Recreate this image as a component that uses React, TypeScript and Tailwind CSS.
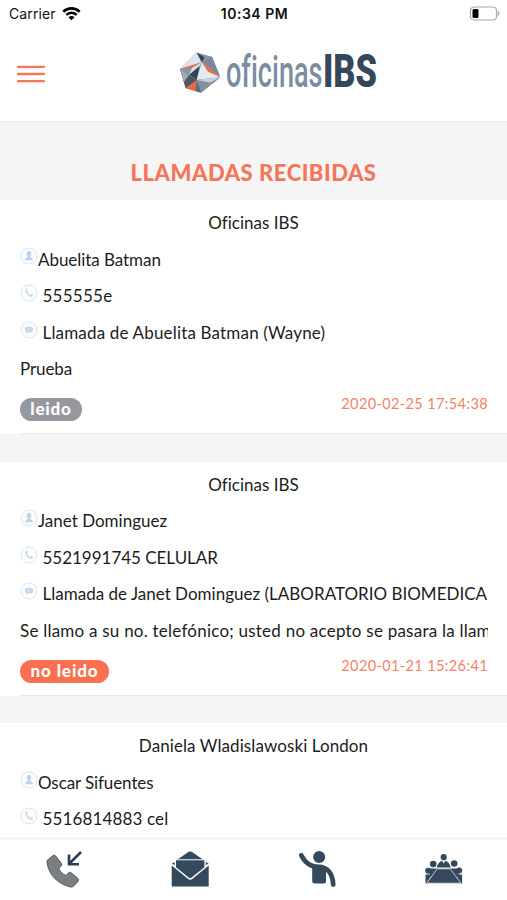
import type { ReactNode } from "react";

type Call = {
  office: string;
  name: string;
  nameClass: string;
  officeClass: string;
  phone: string;
  phoneClass: string;
  subject?: string;
  subjectClass?: string;
  message?: string;
  messageClass?: string;
  read?: boolean;
  date?: string;
};

const calls: Call[] = [
  {
    office: "Oficinas IBS",
    officeClass: "tracking-[0.01px]",
    name: "Abuelita Batman",
    nameClass: "tracking-[-0.05px]",
    phone: "555555e",
    phoneClass: "tracking-[0.25px]",
    subject: "Llamada de Abuelita Batman (Wayne)",
    subjectClass: "tracking-[0.17px]",
    message: "Prueba",
    messageClass: "tracking-[-0.1px]",
    read: true,
    date: "2020-02-25 17:54:38",
  },
  {
    office: "Oficinas IBS",
    officeClass: "tracking-[0.01px]",
    name: "Janet Dominguez",
    nameClass: "tracking-[0px]",
    phone: "5521991745 CELULAR",
    phoneClass: "tracking-[-0.02px]",
    subject: "Llamada de Janet Dominguez (LABORATORIO BIOMEDICA",
    subjectClass: "tracking-[0.01px]",
    message: "Se llamo a su no. telefónico; usted no acepto se pasara la llamada",
    messageClass: "tracking-[0.23px]",
    read: false,
    date: "2020-01-21 15:26:41",
  },
  {
    office: "Daniela Wladislawoski London",
    officeClass: "tracking-[0.09px]",
    name: "Oscar Sifuentes",
    nameClass: "tracking-[-0.1px]",
    phone: "5516814883 cel",
    phoneClass: "tracking-[0.14px]",
  },
];

function StatusBar() {
  return (
    <div className="grid h-[27px] grid-cols-3 items-center pr-[7px] pl-[9px] font-['Inter',sans-serif] text-[14px] text-[#111]">
      <div className="flex items-center gap-[6px]">
        <span className="tracking-[0.1px]">Carrier</span>
        <svg width="19" height="14" viewBox="0 0 19 14" fill="none">
          <path d="M1.3 4.7 C6 0.2 13 0.2 17.7 4.7" stroke="#000" strokeWidth="2.6" />
          <path d="M4.3 7.9 C7.3 5 11.7 5 14.7 7.9" stroke="#000" strokeWidth="2.4" />
          <path d="M6.5 10.2 C8.3 8.6 10.7 8.6 12.5 10.2 L9.5 13.3 Z" fill="#000" />
        </svg>
      </div>
      <span className="text-center font-semibold tracking-[0.5px] whitespace-nowrap">10:34 PM</span>
      <svg className="justify-self-end" width="31" height="15" viewBox="0 0 31 15">
        <rect x="1.5" y="1" width="26" height="13" rx="3.6" fill="#fff" stroke="#a5a5a5" strokeWidth="1.2" />
        <rect x="3.5" y="3" width="6" height="9" rx="1.6" fill="#000" />
        <path d="M28.8 5 C31 6 31 9 28.8 10 Z" fill="#a5a5a5" />
      </svg>
    </div>
  );
}

function Logo() {
  return (
    <svg
      width="206"
      height="64"
      viewBox="178 41 206 64"
      className="font-['Roboto',sans-serif] [font-variant-ligatures:none]"
    >
      <polygon points="196.7,52.5 212,56.7 220.3,77.3 201,92.8 185.7,88.3 180,69" fill="#8793a1" />
      <polygon points="196.7,52.5 180,69 201.7,62.3" fill="#dbe5ee" />
      <polygon points="196.7,52.5 204.5,57.5 201.7,62.3" fill="#35424f" />
      <polygon points="212,56.7 201.7,62.3 220.3,77.3" fill="#7c8896" />
      <polygon points="180,69 201.7,62.3 192,67.8" fill="#f2663f" />
      <polygon points="180,69 192,67.8 189,75" fill="#8b96a3" />
      <polygon points="201.7,62.3 192,67.8 189,75 194,75" fill="#d3dee8" />
      <polygon points="199.5,66 189.5,74.5 196.7,80" fill="#35424f" />
      <polygon points="180,69 196.7,80 185.7,88.3" fill="#4a5766" />
      <polygon points="180,69 189,75 184,82" fill="#a0abb7" />
      <polygon points="201.7,62.3 220.3,77.3 196.7,80" fill="#e3ebf2" />
      <polygon points="201.7,62.3 220.3,77.3 208,71.8" fill="#f2663f" />
      <polygon points="196.7,80 220.3,77.3 201,92.8" fill="#8290a0" />
      <polygon points="196.7,80 220.3,77.3 210,82.5" fill="#c9d3dd" />
      <polygon points="196.7,80 185.7,88.3 195.5,91" fill="#f2663f" />
      <polygon points="196.7,80 201,92.8 195.5,91" fill="#5d6b7a" />
      <text x="226" y="87" fontSize="44.5" fontWeight="500" fill="#7b8ca3" textLength="96.5" lengthAdjust="spacingAndGlyphs">
        oficinas
      </text>
      <text x="323" y="87" fontSize="46" fontWeight="900" fill="#35475a" textLength="54" lengthAdjust="spacingAndGlyphs">
        IBS
      </text>
    </svg>
  );
}

function RoundIcon({ children }: { children: ReactNode }) {
  return (
    <svg className="mb-[7px] shrink-0" width="18" height="18" viewBox="0 0 18 18">
      <circle cx="9" cy="9" r="8" fill="#fbfdff" stroke="#d9e7f3" strokeWidth="1" />
      {children}
    </svg>
  );
}

function PersonIcon() {
  return (
    <RoundIcon>
      <ellipse cx="9" cy="6.8" rx="2.3" ry="2.8" fill="#bfd3e7" />
      <path d="M5 13.3 C5 11 6.6 10.7 7.8 10 V8 H10.2 V10 C11.4 10.7 13 11 13 13.3 Z" fill="#bfd3e7" />
    </RoundIcon>
  );
}

function PhoneIcon() {
  return (
    <RoundIcon>
      <path d="M5.6 5 C6.6 4 7.3 5.1 7.8 6.3 L7.2 7.5 C7.8 9.1 8.8 10.1 10.3 10.7 L11.5 10.1 C13 10.8 13.6 11.4 12.6 12.4 C9.5 14 4.2 8.8 5.6 5 Z" fill="#c9d8e8" />
    </RoundIcon>
  );
}

function MessageIcon() {
  return (
    <RoundIcon>
      <path d="M7 5.7 H11 Q13 5.7 13 7.7 V9.3 Q13 11.3 11 11.3 H8.6 L6.6 12.6 V11.3 Q5 11 5 9.3 V7.7 Q5 5.7 7 5.7 Z" fill="#c3d5e8" />
      <path d="M6.7 7.8 H11.3 M6.7 9.4 H11.3" stroke="#dfeaf5" strokeWidth="0.7" />
    </RoundIcon>
  );
}

function CallCard({ call }: { call: Call }) {
  return (
    <section className="mb-[27.6px] h-[234px] shrink-0 bg-white pt-[5px] text-[17px] leading-[36.6px] whitespace-nowrap text-[#1c1c1c]">
      <div className={`text-center ${call.officeClass}`}>{call.office}</div>
      <div className="ml-5 flex h-[36.6px] items-center">
        <PersonIcon />
        <span className={call.nameClass}>{call.name}</span>
      </div>
      <div className="ml-5 flex h-[36.6px] items-center gap-[4.5px]">
        <PhoneIcon />
        <span className={call.phoneClass}>{call.phone}</span>
      </div>
      {call.date && (
        <>
          <div className="mr-[19px] ml-5 flex h-[36.6px] items-center gap-[4.5px]">
            <MessageIcon />
            <span className={call.subjectClass}>{call.subject}</span>
          </div>
          <div className={`mr-[19px] ml-5 h-[36.6px] overflow-hidden ${call.messageClass}`}>{call.message}</div>
          <div className="ml-5 flex h-[46px] items-start justify-between border-b border-[#e9e9e9] pr-[19px]">
            {call.read ? (
              <span className="mt-[10px] h-[23px] w-[62px] rounded-full bg-[#97979f] text-center text-[17px] leading-[22px] font-black tracking-[0.8px] text-white">
                leido
              </span>
            ) : (
              <span className="mt-[10px] h-[23px] w-[89px] rounded-full bg-[#f8704f] text-center text-[17px] leading-[22px] font-black tracking-[0.9px] text-white">
                no leido
              </span>
            )}
            <span className="mt-[5px] text-[14.5px] leading-[22px] tracking-[0.38px] text-[#f67f66]">{call.date}</span>
          </div>
        </>
      )}
    </section>
  );
}

function TabBar() {
  return (
    <nav className="grid h-[63px] shrink-0 grid-cols-4 items-start justify-items-center border-t-[3px] border-[#f5f5f5] bg-white pt-[9px]">
      {/* Llamadas */}
      <svg width="40" height="42" viewBox="43 849 40 42">
        <path d="M47.5 860 L53 855.5 Q54.5 854.5 55.7 856 L61.5 863.5 Q62.5 865 61 866.3 L58.7 868 C60 871.5 62.5 874 66 875.5 L68.3 873 Q69.5 871.7 71 872.7 L78 878.5 Q79.3 879.7 78 881.3 L73.5 886.3 Q72.5 887.3 70.5 887 C58 884 49 875.5 47 862.5 Q46.7 861 47.5 860 Z" fill="#7c7f81" stroke="#47515a" strokeWidth="0.9" />
        <path d="M81 852 L69.5 863.5 M69 854.5 V864.3 H79" fill="none" stroke="#2c3e55" strokeWidth="2.6" />
      </svg>
      {/* Mensajes */}
      <svg width="40" height="42" viewBox="170.3 849 40 42">
        <g fill="#34495e">
          <path d="M178.5 859 L189 851.8 Q190.5 851 192 851.8 L202.5 859 Z" />
          <path d="M176.3 860.3 H204.7 V867.3 L192 877.6 Q190.5 878.6 189 877.6 L176.3 867.3 Z" />
          <path d="M175 862 V865 L172 863.7 Z M206 862 V865 L209 863.7 Z" />
          <path d="M172 865.5 L188.5 879 Q190.5 880.3 192.5 879 L209 865.5 V886.5 H172 Z" />
        </g>
        <path d="M177 859.6 H204" stroke="#a5bdd2" strokeWidth="0.8" />
      </svg>
      {/* Recepcion */}
      <svg width="40" height="42" viewBox="297.3 849 40 42">
        <circle cx="319.5" cy="857" r="6" fill="#34495e" />
        <path d="M301.7 855.5 C305 862 310 867 319 867 C328 867 333 874 333.5 884.5" fill="none" stroke="#34495e" strokeWidth="4.8" strokeLinecap="round" />
        <path d="M312.5 865 H323 L326.3 869 V881 Q326.3 883.5 323.8 883.5 H315 Q312.5 883.5 312.5 881 Z" fill="#34495e" />
      </svg>
      {/* Salas */}
      <svg width="40" height="42" viewBox="423.8 849 40 42">
        <g fill="#34495e">
          <circle cx="443.5" cy="857.2" r="3.1" />
          <path d="M436.5 867.5 Q438 861.5 442 861 L443.5 863.5 L445 861 Q449 861.5 450.5 867.5 Z" />
          <circle cx="433" cy="864" r="3.3" />
          <circle cx="454" cy="863.5" r="3.3" />
          <path d="M428.5 868.5 H438 L432 877 H430 Z M459 868.5 H449 L455 877 H458 Z" />
          <circle cx="428" cy="870.8" r="3" />
          <circle cx="459" cy="870.5" r="3" />
          <path d="M425.3 874.5 H431.5 L427 883.5 H425.3 Z M461.9 874.5 H455.5 L460 883.5 H461.9 Z" />
        </g>
        <path d="M437 868.8 H450 L460.8 883.2 H426.5 Z" fill="#34495e" stroke="#dce5ec" strokeWidth="0.8" />
      </svg>
    </nav>
  );
}

export default function App() {
  return (
    <div className="flex h-[900px] w-[507px] flex-col overflow-hidden bg-[#f5f5f5] font-['Lato',sans-serif]">
      <header className="h-[122px] shrink-0 border-b border-[#ececec] bg-white">
        <StatusBar />
        <div className="flex h-[92px] items-center pl-[17px]">
          <svg className="mt-[2px]" width="28" height="20" viewBox="0 0 28 20">
            <path d="M1 2.8 H27 M1 10 H27 M1 17.2 H27" stroke="#f8765a" strokeWidth="2.3" strokeLinecap="round" />
          </svg>
          <div className="ml-[133px]">
            <Logo />
          </div>
        </div>
      </header>
      <main className="flex min-h-0 flex-1 flex-col overflow-hidden">
        <h1 className="h-[78px] shrink-0 pt-[38px] text-center text-[22px] leading-[26px] font-black tracking-[0.52px] text-[#f5755a]">
          LLAMADAS RECIBIDAS
        </h1>
        {calls.map((call) => (
          <CallCard key={call.office + call.name} call={call} />
        ))}
      </main>
      <TabBar />
    </div>
  );
}
